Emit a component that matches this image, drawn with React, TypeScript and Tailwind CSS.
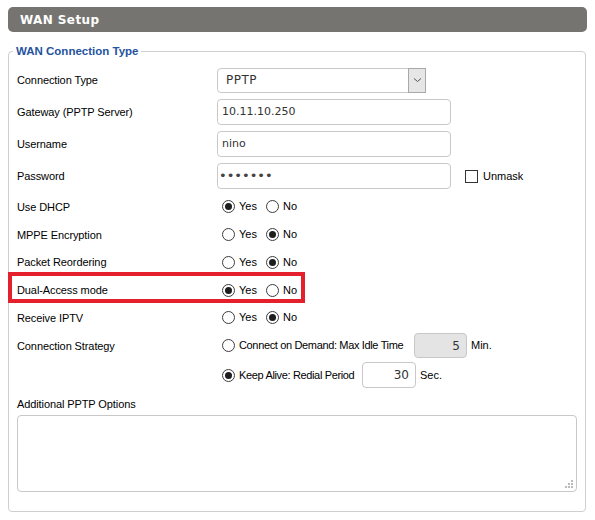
import React from "react";

const LF = { fontFamily: '"Liberation Sans", Arial, sans-serif' };
const VF = { fontFamily: '"DejaVu Sans", Verdana, sans-serif' };

function Radio({ checked }: { checked?: boolean }) {
  return (
    <span className="flex w-[13px] h-[13px] rounded-full border border-[#3c3c3c] bg-white items-center justify-center shrink-0">
      {checked ? <span className="w-[7px] h-[7px] rounded-full bg-[#1e1e1e]" /> : null}
    </span>
  );
}

function YesNo({ yes }: { yes: boolean }) {
  return (
    <div className="flex items-center pl-[5px] text-[11px] text-[#000]" style={LF}>
      <Radio checked={yes} />
      <span className="ml-[4px]">Yes</span>
      <span className="ml-[9px] flex items-center">
        <Radio checked={!yes} />
      </span>
      <span className="ml-[4px]">No</span>
    </div>
  );
}

function Label({ children }: { children: React.ReactNode }) {
  return (
    <div className="w-[200px] shrink-0 text-[11px] text-[#000] leading-[14px] whitespace-nowrap tracking-[-0.1px]" style={LF}>
      {children}
    </div>
  );
}

function TextBox({ value, w = "w-[234px]" }: { value: string; w?: string }) {
  return (
    <div
      className={`${w} h-[26px] rounded-[4px] border border-[#c8c8c8] bg-white flex items-center pl-[4px] text-[11px] text-[#333]`}
      style={VF}
    >
      {value}
    </div>
  );
}

export default function App() {
  return (
    <div className="w-[595px] h-[520px] bg-white px-[8px] pt-[7px]">
      <div className="w-[579px] h-[25px] rounded-[5px] bg-[#767470] flex items-center pl-[12px]">
        <span className="text-white text-[12px] font-bold tracking-[0.4px]" style={VF}>
          WAN Setup
        </span>
      </div>

      <fieldset className="mt-[12px] w-[578px] border border-[#cfcfcf] rounded-[4px] pl-[8px] pr-[8px] pt-[5px] pb-[19px]">
        <legend
          className="-ml-[4px] px-[3px] text-[11.5px] leading-[15px] font-bold text-[#2453a0]"
          style={LF}
        >
          WAN Connection Type
        </legend>

        <div className="flex flex-col">
          <div className="flex items-center h-[32px]">
            <Label>Connection Type</Label>
            <div className="w-[209px] h-[25px] rounded-[4px] border border-[#c8c8c8] bg-white flex items-center">
              <span className="flex-1 pl-[8px] text-[12px] text-[#333] tracking-[0.5px]" style={VF}>
                PPTP
              </span>
              <div className="w-[18px] h-[25px] -mr-[1px] border border-[#a8a8a8] bg-[#e6e6e6] flex items-center justify-center">
                <svg width="9" height="6" viewBox="0 0 9 6">
                  <path d="M1 1.5 L4.5 4.5 L8 1.5" fill="none" stroke="#555" strokeWidth="1" />
                </svg>
              </div>
            </div>
          </div>

          <div className="flex items-center h-[32px]">
            <Label>Gateway (PPTP Server)</Label>
            <TextBox value="10.11.10.250" />
          </div>

          <div className="flex items-center h-[32px]">
            <Label>Username</Label>
            <TextBox value="nino" />
          </div>

          <div className="flex items-center h-[32px]">
            <Label>Password</Label>
            <div
              className="w-[234px] h-[26px] rounded-[4px] border border-[#c8c8c8] bg-white flex items-center pl-[1px] text-[13px] text-[#444]"
              style={VF}
            >
              •••••••
            </div>
            <span className="ml-[14px] w-[13px] h-[13px] border border-[#333] bg-white shrink-0" />
            <span className="ml-[5px] text-[11px] text-[#000]" style={LF}>
              Unmask
            </span>
          </div>

          <div className="flex items-center h-[29px]">
            <Label>Use DHCP</Label>
            <YesNo yes={true} />
          </div>
          <div className="flex items-center h-[27px]">
            <Label>MPPE Encryption</Label>
            <YesNo yes={false} />
          </div>
          <div className="flex items-center h-[28px]">
            <Label>Packet Reordering</Label>
            <YesNo yes={false} />
          </div>
          <div className="relative flex items-center h-[28px]">
            <Label>Dual-Access mode</Label>
            <YesNo yes={true} />
            <div className="absolute left-[-9px] top-[-4px] w-[297px] h-[31px] border-[4px] border-[#e3202b] pointer-events-none" />
          </div>
          <div className="flex items-center h-[27px]">
            <Label>Receive IPTV</Label>
            <YesNo yes={false} />
          </div>

          <div className="flex">
            <div className="h-[29px] flex items-center">
              <Label>Connection Strategy</Label>
            </div>
            <div className="flex flex-col text-[11px] text-[#000] whitespace-nowrap" style={LF}>
              <div className="h-[29px] flex items-center pl-[5px]">
                <Radio />
                <span className="ml-[4px] w-[175px] shrink-0 tracking-[-0.35px]">Connect on Demand: Max Idle Time</span>
                <div
                  className="w-[53px] h-[25px] shrink-0 rounded-[4px] border border-[#c8c8c8] bg-[#e4e4e4] flex items-center justify-end pr-[6px] text-[12px] text-[#333]"
                  style={VF}
                >
                  5
                </div>
                <span className="ml-[4px]">Min.</span>
              </div>
              <div className="h-[30px] flex items-center pl-[5px]">
                <Radio checked />
                <span className="ml-[4px] w-[123px] shrink-0 tracking-[-0.35px]">Keep Alive: Redial Period</span>
                <div
                  className="w-[54px] h-[26px] shrink-0 rounded-[4px] border border-[#c8c8c8] bg-white flex items-center justify-end pr-[6px] text-[12px] text-[#333]"
                  style={VF}
                >
                  30
                </div>
                <span className="ml-[4px]">Sec.</span>
              </div>
            </div>
          </div>

          <div className="mt-[7px]">
            <Label>Additional PPTP Options</Label>
          </div>
          <div className="relative mt-[4px] w-[560px] h-[77px] rounded-[4px] border border-[#c8c8c8] bg-white">
            <svg className="absolute right-[3px] bottom-[3px]" width="8" height="8" viewBox="0 0 8 8">
              <rect x="6" y="0" width="2" height="2" fill="#bbb" />
              <rect x="3" y="3" width="2" height="2" fill="#bbb" />
              <rect x="6" y="3" width="2" height="2" fill="#bbb" />
              <rect x="0" y="6" width="2" height="2" fill="#bbb" />
              <rect x="3" y="6" width="2" height="2" fill="#bbb" />
              <rect x="6" y="6" width="2" height="2" fill="#bbb" />
            </svg>
          </div>
        </div>
      </fieldset>
    </div>
  );
}
